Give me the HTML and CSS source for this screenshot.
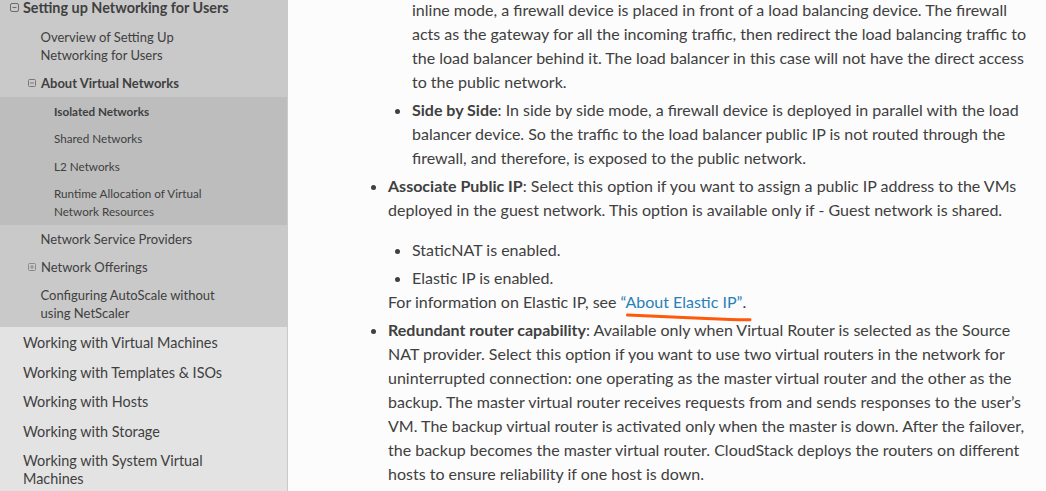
FILE: index.html
```html
<!DOCTYPE html>
<html lang="en">
<head>
<meta charset="utf-8">
<title>Guest network options</title>
<link rel="stylesheet" href="styles.css">
</head>
<body>
<div class="page">
  <nav class="side">
    <ul class="menu">
      <li class="l1 cur">
        <a class="l1a strong"><span class="tog big"><svg viewBox="0 0 9 9" width="9" height="9"><rect x="0.5" y="0.5" width="8" height="8" rx="1.5" fill="none" stroke="#6b6b6b" stroke-width="1"/><line x1="2.5" y1="4.5" x2="6.5" y2="4.5" stroke="#6b6b6b" stroke-width="1"/></svg></span>Setting up Networking for Users</a>
        <ul class="sub2">
          <li><a class="l2a">Overview of Setting Up Networking for Users</a></li>
          <li class="open">
            <a class="l2a strong"><span class="tog"><svg viewBox="0 0 8 8" width="8" height="8"><rect x="0.5" y="0.5" width="7" height="7" rx="1" fill="none" stroke="#777" stroke-width="1"/><line x1="2" y1="4" x2="6" y2="4" stroke="#777" stroke-width="1"/></svg></span>About Virtual Networks</a>
            <ul class="sub3">
              <li><a class="l3a strong">Isolated Networks</a></li>
              <li><a class="l3a">Shared Networks</a></li>
              <li><a class="l3a">L2 Networks</a></li>
              <li><a class="l3a">Runtime Allocation of Virtual Network Resources</a></li>
            </ul>
          </li>
          <li><a class="l2a">Network Service Providers</a></li>
          <li><a class="l2a"><span class="tog"><svg viewBox="0 0 8 8" width="8" height="8"><rect x="0.5" y="0.5" width="7" height="7" rx="1" fill="none" stroke="#8a8a8a" stroke-width="1"/><line x1="2" y1="4" x2="6" y2="4" stroke="#8a8a8a" stroke-width="1"/><line x1="4" y1="2" x2="4" y2="6" stroke="#8a8a8a" stroke-width="1"/></svg></span>Network Offerings</a></li>
          <li><a class="l2a">Configuring AutoScale without using NetScaler</a></li>
        </ul>
      </li>
      <li class="l1"><a class="l1a">Working with Virtual Machines</a></li>
      <li class="l1"><a class="l1a">Working with Templates &amp; ISOs</a></li>
      <li class="l1"><a class="l1a">Working with Hosts</a></li>
      <li class="l1"><a class="l1a">Working with Storage</a></li>
      <li class="l1"><a class="l1a">Working with System Virtual Machines</a></li>
    </ul>
  </nav>
  <main class="content">
    <ul class="list">
      <li class="cont">
        <ul class="list inner">
          <li class="cont">inline mode, a firewall device is placed in front of a load balancing device. The firewall acts as the gateway for all the incoming traffic, then redirect the load balancing traffic to the load balancer behind it. The load balancer in this case will not have the direct access to the public network.</li>
          <li><b>Side by Side</b>: In side by side mode, a firewall device is deployed in parallel with the load balancer device. So the traffic to the load balancer public IP is not routed through the firewall, and therefore, is exposed to the public network.</li>
        </ul>
      </li>
      <li>
        <p class="para"><b>Associate Public IP</b>: Select this option if you want to assign a public IP address to the VMs deployed in the guest network. This option is available only if - Guest network is shared.</p>
        <ul class="list inner gapped">
          <li>StaticNAT is enabled.</li>
          <li>Elastic IP is enabled.</li>
        </ul>
        <p class="para">For information on Elastic IP, see <a class="ref">“About Elastic IP”<svg class="mark" viewBox="0 0 126 9" width="126" height="9"><path d="M1.5 2 C 30 3.2, 55 4.5, 80 5.6 S 112 7, 124 6.8" fill="none" stroke="#ff5a0a" stroke-width="3" stroke-linecap="round"/></svg></a>.</p>
      </li>
      <li><b>Redundant router capability</b>: Available only when Virtual Router is selected as the Source NAT provider. Select this option if you want to use two virtual routers in the network for uninterrupted connection: one operating as the master virtual router and the other as the backup. The master virtual router receives requests from and sends responses to the user’s VM. The backup virtual router is activated only when the master is down. After the failover, the backup becomes the master virtual router. CloudStack deploys the routers on different hosts to ensure reliability if one host is down.</li>
    </ul>
  </main>
</div>
</body>
</html>
```
FILE: styles.css
```css
* { box-sizing: border-box; }
html, body { margin: 0; padding: 0; }
body {
  background: #fcfcfc;
  font-family: Lato, "Open Sans", "Liberation Sans", sans-serif;
  color: #404040;
  overflow: hidden;
}
.page {
  display: flex;
  align-items: flex-start;
  height: 491px;
  overflow: hidden;
}
.side {
  width: 288px;
  flex: none;
  background: #e3e3e3;
  border-right: 1px solid #cacaca;
  min-height: 491px;
  align-self: stretch;
}
.menu, .sub2, .sub3 { list-style: none; margin: 0; padding: 0; }
.menu { margin-top: -6.5px; }
.side a { display: block; color: #404040; line-height: 18px; text-decoration: none; }
.strong { font-weight: 700; }
.l1a {
  font-size: 14.4px;
  padding: 5.8px 40px 5.8px 23px;
}
.l1:not(.cur) .l1a { padding-top: 7.4px; padding-bottom: 4.1px; }
.l1.cur { background: #c9c9c9; }
.l2a {
  font-size: 13px;
  padding: 5px 52px 5px 40.5px;
  color: #4d4d4d;
}
.sub3 { background: #bdbdbd; }
.l3a {
  font-size: 11.7px;
  padding: 4.75px 52px 4.75px 54px;
}
.tog { display: inline-block; vertical-align: top; }
.tog svg { display: block; }
.l1a .tog { margin: 3.5px 4px 0 -13px; }
.l2a .tog { margin: 4.5px 5px 0 -12.5px; }

.content {
  flex: 1;
  padding: 0 12px 0 52px;
  font-size: 16px;
  line-height: 24px;
}
.list { margin: 0; padding: 0 0 0 24px; list-style: disc; }
.content > .list { margin-top: -2px; }
.list li { margin: 0 0 0 24px; }
.list li + li { margin-top: 4px; }
.inner { padding-left: 0; }
.list .cont { list-style: none; }
.para { margin: 0; }
.gapped { margin-top: 16px; }
.gapped li + li { margin-top: 4px; }
b { font-weight: 700; }
.ref { color: #2980b9; text-decoration: none; position: relative; }
.mark { position: absolute; left: 5px; top: 100%; margin-top: 2px; overflow: visible; }
```
